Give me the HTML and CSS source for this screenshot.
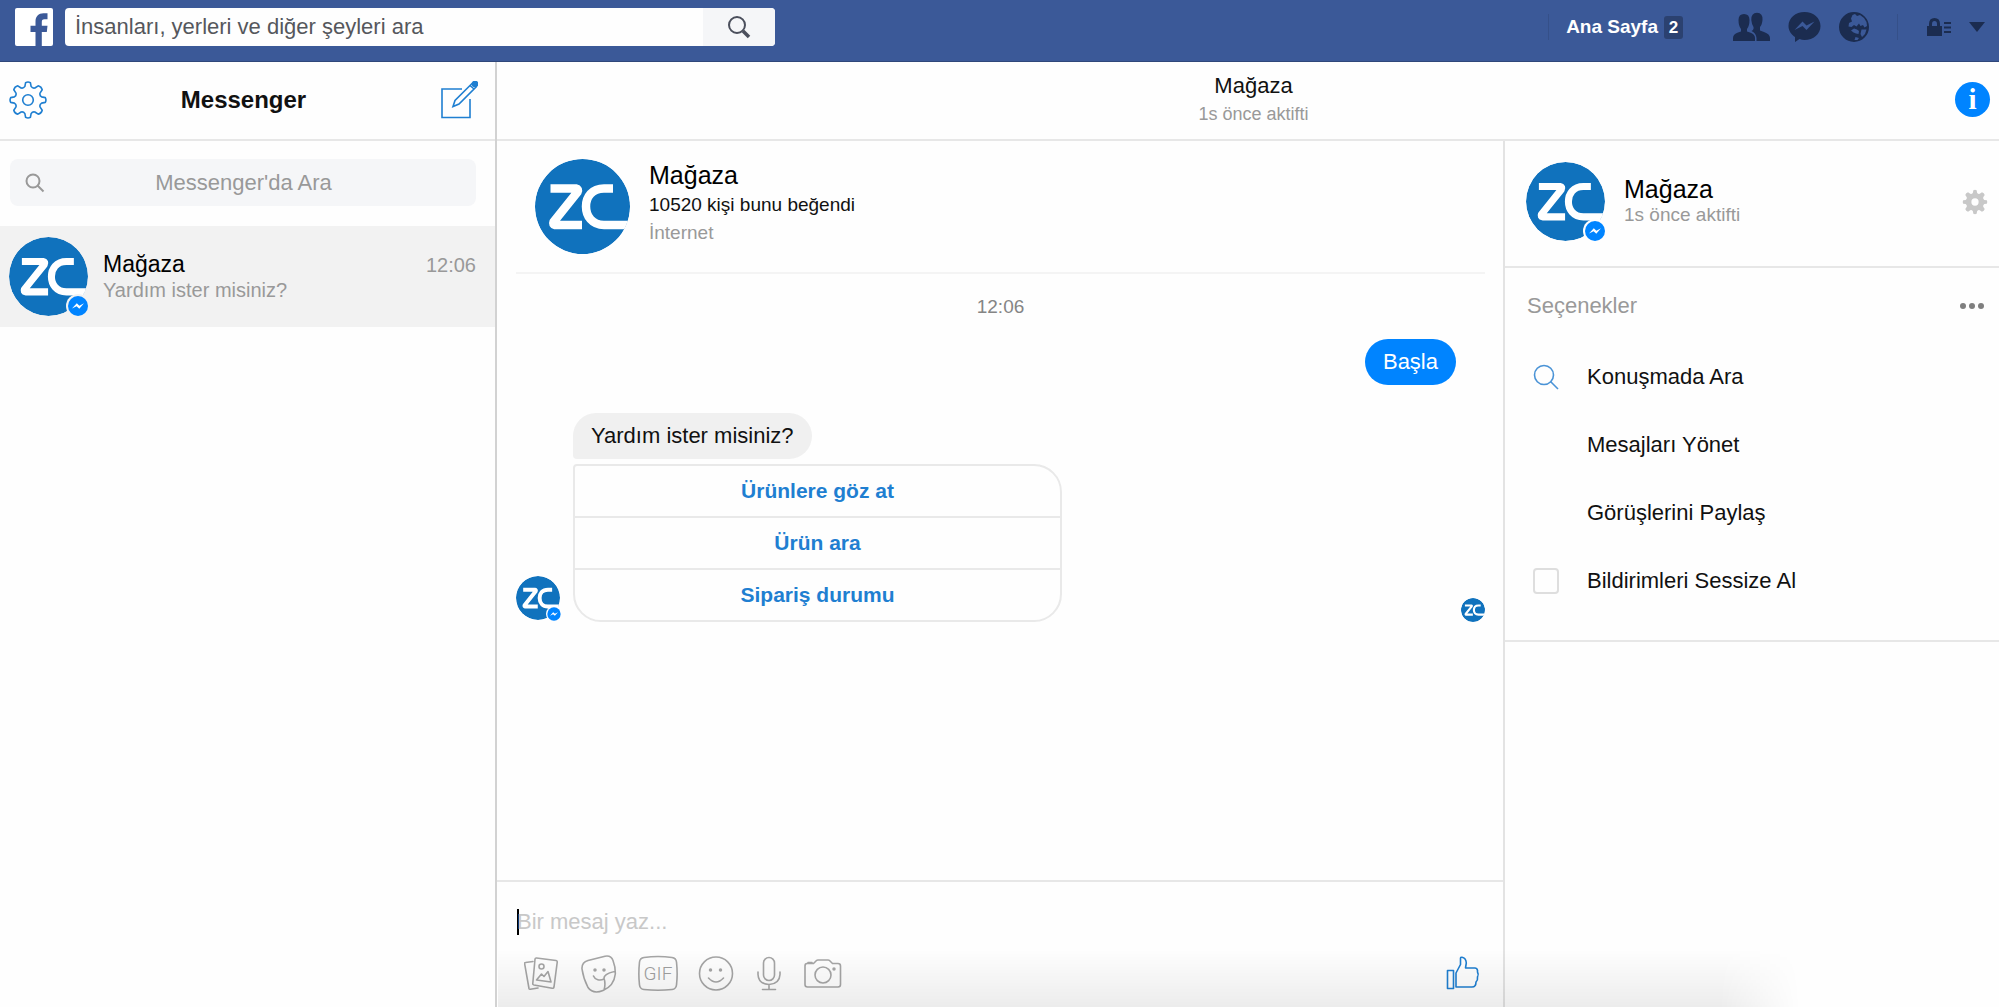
FILE: index.html
```html
<!DOCTYPE html>
<html lang="tr">
<head>
<meta charset="utf-8">
<meta name="viewport" content="width=device-width, initial-scale=1">
<title>Messenger</title>
<link rel="stylesheet" href="styles.css">
</head>
<body>
<svg class="sprite" aria-hidden="true">
  <symbol id="zc-logo" viewBox="0 0 95 95">
    <clipPath id="disc"><circle cx="47.5" cy="47.5" r="47.5"/></clipPath>
    <g clip-path="url(#disc)">
      <circle cx="47.5" cy="47.5" r="47.5" fill="#1072bd"/>
      <g fill="none" stroke="#fff" stroke-width="8.5" stroke-linejoin="round">
        <path d="M15.500 29.500H41Q44 30 42.500 33L18.500 63Q17.500 65.500 20 66H47"/>
        <path d="M78 29.500H69C57 29.500 51 38 51 47.500S57 66 69 66H95"/>
      </g>
    </g>
  </symbol>
  <symbol id="bolt-badge" viewBox="0 0 24 24">
    <circle cx="12" cy="12" r="12" class="ring"/>
    <circle cx="12" cy="12" r="10" fill="#0084ff"/>
    <path d="M6 14.600L10.800 9.200L13.400 11.700L18 9.300L13.300 14.700L10.600 12.200Z" fill="#fff"/>
  </symbol>
  <symbol id="gear-shape" viewBox="-19 -19 38 38">
    <path fill-rule="evenodd" stroke-linejoin="round" d="M-2.400-17.300Q0-18.600 2.400-17.300L3.100-13.600Q4.500-11.400 6.900-12L10.200-14.200Q13.400-13.400 14.200-10.200L12-6.900Q11.400-4.500 13.600-3.100L17.300-2.400Q18.600 0 17.300 2.400L13.600 3.100Q11.400 4.500 12 6.900L14.200 10.200Q13.400 13.400 10.200 14.200L6.900 12Q4.500 11.400 3.100 13.600L2.400 17.300Q0 18.600-2.400 17.300L-3.100 13.600Q-4.500 11.400-6.900 12L-10.200 14.200Q-13.400 13.400-14.200 10.200L-12 6.900Q-11.400 4.500-13.600 3.100L-17.300 2.400Q-18.600 0-17.300-2.400L-13.600-3.100Q-11.400-4.500-12-6.900L-14.200-10.200Q-13.400-13.400-10.200-14.200L-6.900-12Q-4.500-11.400-3.100-13.600ZM5.300 0A5.300 5.300 0 1 0-5.300 0A5.300 5.300 0 1 0 5.300 0Z"/>
  </symbol>
</svg>

<header class="topbar">
  <a class="brand" href="#" aria-label="Facebook">
    <svg width="38" height="38" viewBox="0 0 38 38"><rect width="38" height="38" rx="2" fill="#fff"/><path d="M20.500 38V24H15.500V17.800H20.500V13.500C20.500 8.500 23.500 5.300 28.500 5.300H32.500V11.300H29.500C27.200 11.300 26.800 12.400 26.800 14.200V17.800H32.500L31.800 24H26.800V38Z" fill="#3b5998"/></svg>
  </a>
  <form class="site-search">
    <input type="search" aria-label="İnsanları, yerleri ve diğer şeyleri ara" placeholder="İnsanları, yerleri ve diğer şeyleri ara">
    <button type="button" aria-label="Ara">
      <svg width="24" height="24" viewBox="0 0 24 24" fill="none" stroke="#4b4f5c"><circle cx="10" cy="10" r="8" stroke-width="2"/><path d="M16 16L22 22" stroke-width="3.500"/></svg>
    </button>
  </form>
  <nav class="site-nav">
    <a class="home" href="#">Ana Sayfa <span class="count">2</span></a>
    <div class="nav-icons">
      <a href="#" aria-label="Arkadaşlar"><svg width="37" height="30" viewBox="0 0 37 30"><path d="M0 29V26Q0 22 5 20.500L8 19.500V17Q5.500 14 5.500 8Q5.500 2 11 2Q16.500 2 16.500 8Q16.500 14 14 17V19.500L17 20.500Q22 22 22 26V29Z"/><path d="M23.500 29V26Q23 21 18.500 19L20 18Q21 16 20.500 15Q18.800 13 18.300 8Q18 1 24 .800Q30 1 29.500 8Q29 13 27 15V18.500L31 20Q37 22 37 26V29Z"/></svg></a>
      <a href="#" aria-label="Mesajlar"><svg width="33" height="32" viewBox="0 0 33 32"><path fill-rule="evenodd" d="M16.500 1C7.500 1 .500 7 .500 15C.500 19.500 3 23.500 7 26V31L11.500 28Q14 29 16.500 29C25.500 29 32.500 23 32.500 15S25.500 1 16.500 1ZM6.500 19L14.500 10.500L18.500 14.500L26.500 10.500L18.500 19L14.500 15Z"/></svg></a>
      <a href="#" aria-label="Bildirimler"><svg width="30" height="30" viewBox="0 0 30 30"><path fill-rule="evenodd" d="M15 0A15 15 0 1 0 15 30A15 15 0 1 0 15 0ZM13.500 3L16 2L18 4L21 3L25 6L27.500 10L28 14L25.500 15.500L24 13L21.500 14L20 11.500L17.500 14.500L15 13L12.500 15L9.500 14.500L10 11L13 9.500L12 6.500ZM12 18.500L15 16.500L18 17.500L20 19L19.500 22L17 21.500L14.500 20.500ZM22.500 17.500L27.500 17.500L26 22L23 25L21.500 22ZM16.500 25L20 26L18.500 28L15.500 28Z"/></svg></a>
    </div>
    <div class="nav-tools">
      <a href="#" aria-label="Gizlilik"><svg width="24" height="18" viewBox="0 0 24 18"><path fill-rule="evenodd" d="M0 8H2V6Q2 0 7.500 0T13 6V8H15V18H0ZM5 8H10V6Q10 3 7.500 3T5 6Z"/><path d="M17 4H24V6H17ZM17 8.500H24V10.500H17ZM17 13H24V15H17Z"/></svg></a>
      <a href="#" aria-label="Hesap"><svg width="16" height="10" viewBox="0 0 16 10"><path d="M0 0H16L8 10Z"/></svg></a>
    </div>
  </nav>
</header>

<main class="app">
  <aside class="sidebar">
    <header class="bar">
      <button type="button" aria-label="Ayarlar"><svg class="line-blue" width="38" height="38"><use href="#gear-shape"/></svg></button>
      <h1>Messenger</h1>
      <button type="button" aria-label="Yeni Mesaj"><svg class="line-blue" width="38" height="38" viewBox="0 0 38 38"><path d="M22 8H2V36.500H30V18M13 25.500L15 19.500L32 2.500L36 6L19 23ZM30 4.500L34 8"/><circle cx="35" cy="3" r="2.500" fill="#1f7fd1"/></svg></button>
    </header>
    <label class="filter">
      <svg width="20" height="20" viewBox="0 0 20 20" fill="none" stroke="#999" stroke-width="2"><circle cx="8" cy="8" r="6.500"/><path d="M12.500 12.500L18.500 18.500"/></svg>
      <input type="search" aria-label="Messenger'da Ara" placeholder="Messenger'da Ara">
    </label>
    <a class="thread" href="#">
      <span class="avatar avatar-md on-gray"><svg class="face"><use href="#zc-logo"/></svg><svg class="badge"><use href="#bolt-badge"/></svg></span>
      <span class="thread-text"><strong>Mağaza</strong><span>Yardım ister misiniz?</span></span>
      <time>12:06</time>
    </a>
  </aside>

  <section class="main">
    <header class="bar chat-bar">
      <div class="chat-title"><h2>Mağaza</h2><p>1s önce aktifti</p></div>
      <button class="info" type="button" aria-label="Bilgi">i</button>
    </header>
    <div class="columns">
      <section class="chat">
        <div class="messages">
          <div class="intro">
            <span class="avatar avatar-lg"><svg class="face"><use href="#zc-logo"/></svg></span>
            <div><h3>Mağaza</h3><p>10520 kişi bunu beğendi</p><p class="muted">İnternet</p></div>
          </div>
          <time class="stamp">12:06</time>
          <p class="bubble sent">Başla</p>
          <div class="received">
            <span class="avatar avatar-sm"><svg class="face"><use href="#zc-logo"/></svg><svg class="badge"><use href="#bolt-badge"/></svg></span>
            <div class="stack">
              <p class="bubble">Yardım ister misiniz?</p>
              <div class="choices">
                <button type="button">Ürünlere göz at</button>
                <button type="button">Ürün ara</button>
                <button type="button">Sipariş durumu</button>
              </div>
            </div>
            <span class="avatar avatar-xs"><svg class="face"><use href="#zc-logo"/></svg></span>
          </div>
        </div>
        <form class="composer">
          <div class="entry"><span class="caret"></span><input type="text" aria-label="Bir mesaj yaz..." placeholder="Bir mesaj yaz..."></div>
          <div class="tools">
            <button type="button" aria-label="Fotoğraf"><svg width="36" height="38" viewBox="0 0 36 38"><path d="M9 6.500L1.500 7.500Q.500 7.600.600 8.600L5 33.500Q5.200 34.400 6.200 34.300L14 33M12.500 3L32 5.500Q33.500 5.800 33.200 7.300L30 32Q29.700 33.500 28.200 33.200L10 30Q8.500 29.700 8.800 28.200L11 4.200Q11.200 2.900 12.500 3ZM12.500 25L17.500 19L20 21.500L24 16.500L27 27Z"/><circle cx="17.500" cy="11.500" r="2.500"/></svg></button>
            <button type="button" aria-label="Çıkartma"><svg width="38" height="38" viewBox="0 0 38 38"><path d="M8 5.500L25 1.200Q31 0 33 5.500Q35.500 12 35.300 19Q34 31 23 35.500Q13 39.500 8 32.500Q3.500 24 2 14Q1.500 7.500 8 5.500ZM35 16.500C27 18 22.500 21 24.500 25C25.300 29 25 32 24 35M13.500 21C15 25 20 26 24 24"/><path class="dot" d="M15 15V15.100M24 15V15.100"/></svg></button>
            <button type="button" aria-label="GIF"><svg width="40" height="38" viewBox="0 0 40 38"><path d="M6 2.500Q20 .500 34 2.500Q38 3 38.500 7Q39.800 19 38.500 30Q38 34 34 34.500Q20 36 6 34.500Q2 34 1.500 30Q.200 19 1.500 7Q2 3 6 2.500Z"/><text class="gif" x="20" y="25" text-anchor="middle">GIF</text></svg></button>
            <button type="button" aria-label="Emoji"><svg width="36" height="38" viewBox="0 0 36 38"><circle cx="18" cy="18.500" r="16.500"/><path d="M10.500 23Q18 31 25.500 23"/><path class="dot" d="M12.500 15V15.100M22.500 15V15.100"/></svg></button>
            <button type="button" aria-label="Ses"><svg width="30" height="38" viewBox="0 0 30 38"><rect x="9.500" y="2.500" width="11" height="23" rx="5.500"/><path d="M4 17V19.500Q4.500 29 15 29.500Q25.500 29 26 19.500V17M15 29.500V34.500M8.500 34.500H21.500"/></svg></button>
            <button type="button" aria-label="Kamera"><svg width="38" height="38" viewBox="0 0 38 38"><path d="M3 8.500H9.500L12.500 5.500Q13 5 14 5H24Q25 5 25.500 5.500L28.500 8.500H34Q36.500 8.500 36.500 11V29.500Q36.500 32 34 32H3.500Q1 32 1 29.500V11Q1 8.500 3 8.500ZM4 7.500H8"/><circle cx="19" cy="20" r="8"/><path class="dot" d="M30 14V14.100"/></svg></button>
            <button class="like" type="button" aria-label="Beğen"><svg class="line-blue" width="34" height="38" viewBox="0 0 34 38"><path d="M1.500 15.500H7.500V33.500H1.500ZM10 32V18L14.500 9.500V3.500Q14.500 2 16 2.200Q20 3 20.300 8L19.500 13H29Q32 13.500 31.500 17Q33 19.500 31.500 22Q32 25 30 27Q30 32 26 32Z"/></svg></button>
          </div>
        </form>
      </section>

      <aside class="details">
        <div class="profile">
          <span class="avatar avatar-md"><svg class="face"><use href="#zc-logo"/></svg><svg class="badge"><use href="#bolt-badge"/></svg></span>
          <div class="profile-text"><h3>Mağaza</h3><p>1s önce aktifti</p></div>
          <button type="button" aria-label="Ayarlar"><svg width="26" height="26" fill="#c8c8c8"><use href="#gear-shape"/></svg></button>
        </div>
        <div class="options">
          <div class="options-head"><h4>Seçenekler</h4><button type="button" aria-label="Diğer"><svg width="26" height="8" viewBox="0 0 26 8" fill="#7f7f7f"><circle cx="4" cy="4" r="3"/><circle cx="13" cy="4" r="3"/><circle cx="22" cy="4" r="3"/></svg></button></div>
          <button class="option" type="button"><svg width="26" height="26" viewBox="0 0 26 26" fill="none" stroke="#4a93d6" stroke-width="1.600"><circle cx="11" cy="11" r="9.500"/><path d="M17.500 17.500L25 25"/></svg><span>Konuşmada Ara</span></button>
          <button class="option" type="button"><span>Mesajları Yönet</span></button>
          <button class="option" type="button"><span>Görüşlerini Paylaş</span></button>
          <label class="option"><input type="checkbox"><span>Bildirimleri Sessize Al</span></label>
        </div>
      </aside>
    </div>
  </section>
</main>
</body>
</html>
```
FILE: styles.css
```css
* { box-sizing: border-box; }

body {
  margin: 0;
  min-height: 100vh;
  display: flex;
  flex-direction: column;
  background: #fefefe;
  color: #111;
  font-family: "Liberation Sans", Arial, sans-serif;
  font-size: 22px;
  line-height: 26px;
}

/* Soft shade along the bottom edge of the window */
body::after {
  content: "";
  position: fixed;
  left: 498px;
  right: 199px;
  bottom: 0;
  height: 58px;
  background: linear-gradient(transparent, rgba(0, 0, 0, .07));
  -webkit-mask-image: linear-gradient(to left, transparent, #000 80px);
  mask-image: linear-gradient(to left, transparent, #000 80px);
  pointer-events: none;
}

h1, h2, h3, h4, p { margin: 0; font-weight: 400; }
a { color: inherit; text-decoration: none; }
svg { display: block; }
button {
  margin: 0;
  padding: 0;
  border: 0;
  background: none;
  color: inherit;
  font: inherit;
  cursor: pointer;
}
input {
  margin: 0;
  padding: 0;
  border: 0;
  outline: 0;
  background: none;
  color: inherit;
  font: inherit;
  -webkit-appearance: none;
  appearance: none;
}
input::placeholder { color: inherit; opacity: 1; }

.sprite { position: absolute; width: 0; height: 0; }
.line-blue { fill: none; stroke: #1f7fd1; stroke-width: 1.6; }

/* Site bar */
.topbar {
  display: flex;
  align-items: center;
  padding: 8px 14px 15px 15px;
  border-bottom: 1px solid #2f477a;
  background: #3b5998;
}
.site-search {
  display: flex;
  flex: 0 1 710px;
  height: 38px;
  margin-left: 12px;
  border-radius: 4px;
  overflow: hidden;
  background: #fefefe;
}
.site-search input { flex: 1; min-width: 0; padding-left: 10px; color: #55575c; }
.site-search button {
  display: grid;
  place-items: center;
  width: 72px;
  background: #f5f6f8;
}
.site-nav { display: flex; align-items: center; margin-left: auto; fill: #1b2c50; }
.home {
  display: flex;
  align-items: center;
  gap: 6px;
  padding-left: 17px;
  border-left: 1px solid #355089;
  color: #fff;
  font-size: 19px;
  font-weight: 700;
}
.count {
  width: 19px;
  border-radius: 3px;
  background: #2b4170;
  font-size: 17px;
  line-height: 23px;
  text-align: center;
}
.nav-icons { display: flex; align-items: center; gap: 18px; margin: 0 28px 0 50px; }
.nav-tools {
  display: flex;
  align-items: center;
  gap: 18px;
  height: 26px;
  padding-left: 29px;
  border-left: 1px solid #355089;
}

/* Page frame */
.app { flex: 1; display: grid; grid-template-columns: 497px minmax(0, 1fr); }
.bar {
  display: flex;
  align-items: center;
  height: 79px;
  padding-bottom: 2px;
  border-bottom: 2px solid #e7e7e7;
}
.main { display: flex; flex-direction: column; min-width: 0; }
.columns { flex: 1; display: grid; grid-template-columns: minmax(0, 1fr) 496px; }

/* Avatars */
.avatar { position: relative; flex: none; }
.face { width: 100%; height: 100%; }
.badge { position: absolute; right: -2px; bottom: -2px; width: 24px; height: 24px; fill: #fefefe; }
.on-gray .badge { fill: #f2f2f2; }
.avatar-lg { width: 95px; height: 95px; }
.avatar-md { width: 79px; height: 79px; }
.avatar-sm { width: 44px; height: 44px; margin-bottom: 2px; }
.avatar-sm .badge { width: 16px; height: 16px; }
.avatar-xs { width: 24px; height: 24px; }

/* Conversation list */
.sidebar { border-right: 2px solid #d2d2d2; }
.sidebar .bar { justify-content: space-between; padding-left: 9px; padding-right: 17px; }
h1 { font-size: 24px; font-weight: 700; }
.filter {
  display: flex;
  align-items: center;
  height: 47px;
  margin: 18px 19px 20px 10px;
  padding: 0 15px;
  border-radius: 8px;
  background: #f5f6f8;
  color: #999;
}
.filter input { flex: 1; min-width: 0; text-align: center; }
.thread {
  display: flex;
  align-items: center;
  gap: 15px;
  height: 101px;
  padding: 0 19px 0 9px;
  background: #f2f2f2;
}
.thread-text { flex: 1; display: flex; flex-direction: column; color: #999; font-size: 20px; line-height: 26px; }
.thread-text strong { color: #000; font-size: 23px; font-weight: 400; }
.thread time { align-self: flex-start; margin-top: 26px; color: #999; font-size: 20px; }

/* Conversation header */
.chat-bar { padding-left: 55px; padding-right: 9px; }
.chat-title { flex: 1; text-align: center; }
.chat-title h2 { font-size: 22px; line-height: 28px; }
.chat-title p { color: #999; font-size: 18px; line-height: 28px; }
.info {
  width: 35px;
  height: 35px;
  border-radius: 50%;
  background: #0084ff;
  color: #fff;
  font: 29px/35px "Liberation Serif", serif;
  font-weight: 700;
}

/* Messages */
.chat { display: flex; flex-direction: column; min-width: 0; }
.messages { flex: 1; padding: 0 18px 20px 19px; }
.intro {
  display: flex;
  gap: 19px;
  padding: 18px 19px;
  border-bottom: 2px solid #f4f4f4;
  color: #111;
  font-size: 19px;
  line-height: 28px;
}
h3 { color: #000; font-size: 25px; line-height: 30px; }
.intro h3 { line-height: 32px; }
.muted { color: #999; }
.stamp { display: block; margin: 20px 0 19px; color: #858585; font-size: 19px; text-align: center; }
.bubble {
  width: fit-content;
  padding: 10px 18px;
  border-radius: 23px 23px 23px 4px;
  background: #f0f0f0;
}
.sent {
  margin: 0 29px 28px auto;
  border-radius: 23px;
  background: #0084ff;
  color: #fff;
}
.received { display: flex; align-items: flex-end; gap: 13px; }
.stack { flex: 0 1 489px; display: grid; gap: 5px; }
.avatar-xs { margin-left: auto; }
.choices {
  display: grid;
  border: 2px solid #e9e9e9;
  border-radius: 4px 28px 28px 28px;
  color: #1f7fd1;
  font-size: 21px;
  font-weight: 700;
}
.choices button { height: 50px; }
.choices button + button { height: 52px; border-top: 2px solid #e9e9e9; }

/* Composer */
.composer { padding: 27px 19px 14px; border-top: 2px solid #e7e7e7; }
.entry { display: flex; height: 26px; margin-bottom: 20px; color: #c8c8c8; }
.caret { width: 2px; margin: 0 -2px 0 1px; background: #000; }
.entry input { flex: 1; min-width: 0; }
.tools {
  display: flex;
  gap: 20px;
  padding-left: 8px;
  fill: none;
  stroke: #a6a6a6;
  stroke-width: 1.6;
  stroke-linecap: round;
  stroke-linejoin: round;
}
.dot { stroke-width: 3.5; }
.gif { fill: #a0a0a0; stroke: none; font: 300 19px Roboto, sans-serif; }
.like { margin: 0 4px 0 auto; }

/* Details panel */
.details { border-left: 2px solid #e3e3e3; }
.profile {
  display: flex;
  align-items: center;
  gap: 19px;
  padding: 21px 11px 25px 21px;
  border-bottom: 2px solid #e7e7e7;
}
.profile-text { padding-bottom: 4px; }
.profile p { color: #999; font-size: 19px; line-height: 22px; }
.profile button { margin-left: auto; }
.options { padding: 25px 0; border-bottom: 2px solid #e7e7e7; }
.options-head {
  display: flex;
  align-items: center;
  justify-content: space-between;
  margin-bottom: 24px;
  padding: 0 14px 0 22px;
  color: #999;
}
h4 { font-size: 22px; }
.option {
  display: grid;
  grid-template-columns: 26px 1fr;
  column-gap: 28px;
  align-items: center;
  width: 100%;
  height: 68px;
  padding-left: 28px;
  text-align: left;
}
.option span { grid-column: 2; }
.option input {
  width: 26px;
  height: 26px;
  border: 2px solid #dedede;
  border-radius: 4px;
}
```
